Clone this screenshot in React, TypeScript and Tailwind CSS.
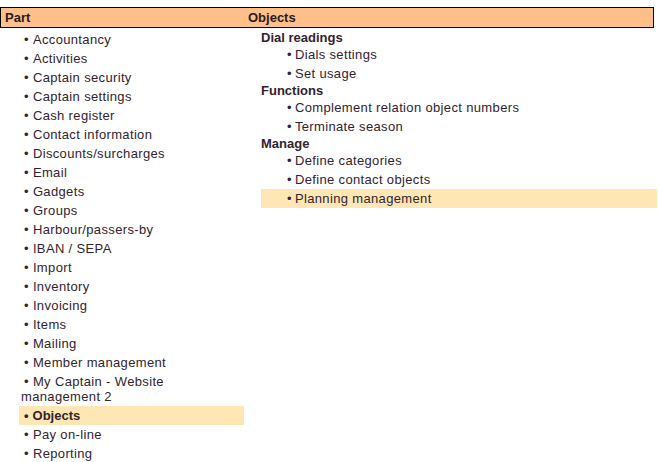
const parts = [
  "Accountancy",
  "Activities",
  "Captain security",
  "Captain settings",
  "Cash register",
  "Contact information",
  "Discounts/surcharges",
  "Email",
  "Gadgets",
  "Groups",
  "Harbour/passers-by",
  "IBAN / SEPA",
  "Import",
  "Inventory",
  "Invoicing",
  "Items",
  "Mailing",
  "Member management",
  "My Captain - Website management 2",
  "Objects",
  "Pay on-line",
  "Reporting",
];

const groups = [
  { title: "Dial readings", items: ["Dials settings", "Set usage"] },
  { title: "Functions", items: ["Complement relation object numbers", "Terminate season"] },
  { title: "Manage", items: ["Define categories", "Define contact objects", "Planning management"] },
];

export default function App() {
  return (
    <div
      className="w-[658px] h-[462px] overflow-hidden bg-white pt-[7px] text-[13px] tracking-[0.35px] text-[#33232f]"
      style={{ fontFamily: '"Liberation Sans", Arial, sans-serif' }}
    >
      <div className="w-[654px] h-[21px] grid grid-cols-[243px_1fr] items-center border border-black bg-[#ffbf88] font-bold tracking-normal text-[#2a1a1f] leading-[19px]">
        <div className="pl-[4px]">Part</div>
        <div className="pl-[4px]">Objects</div>
      </div>
      <div className="grid grid-cols-[244px_1fr]">
        <ul className="pl-[19px] pt-[2px]">
          {parts.map((p) => (
            <li
              key={p}
              className={
                "pl-[2px] py-[2px] leading-[15px] " +
                (p === "Objects" ? "bg-[#fee7b5] font-bold tracking-normal" : "")
              }
            >
              <span className="ml-[3px] mr-[4px]">•</span>
              {p}
            </li>
          ))}
        </ul>
        <div className="pl-[17px] pr-[1px] pt-[2px]">
          {groups.map((g) => (
            <div key={g.title}>
              <div className="font-bold tracking-normal leading-[15px]">{g.title}</div>
              <ul>
                {g.items.map((it) => (
                  <li
                    key={it}
                    className={
                      "pl-[26px] py-[2px] leading-[15px] " +
                      (it === "Planning management" ? "bg-[#fee7b5]" : "")
                    }
                  >
                    <span className="mr-[3px]">•</span>
                    {it}
                  </li>
                ))}
              </ul>
            </div>
          ))}
        </div>
      </div>
    </div>
  );
}
